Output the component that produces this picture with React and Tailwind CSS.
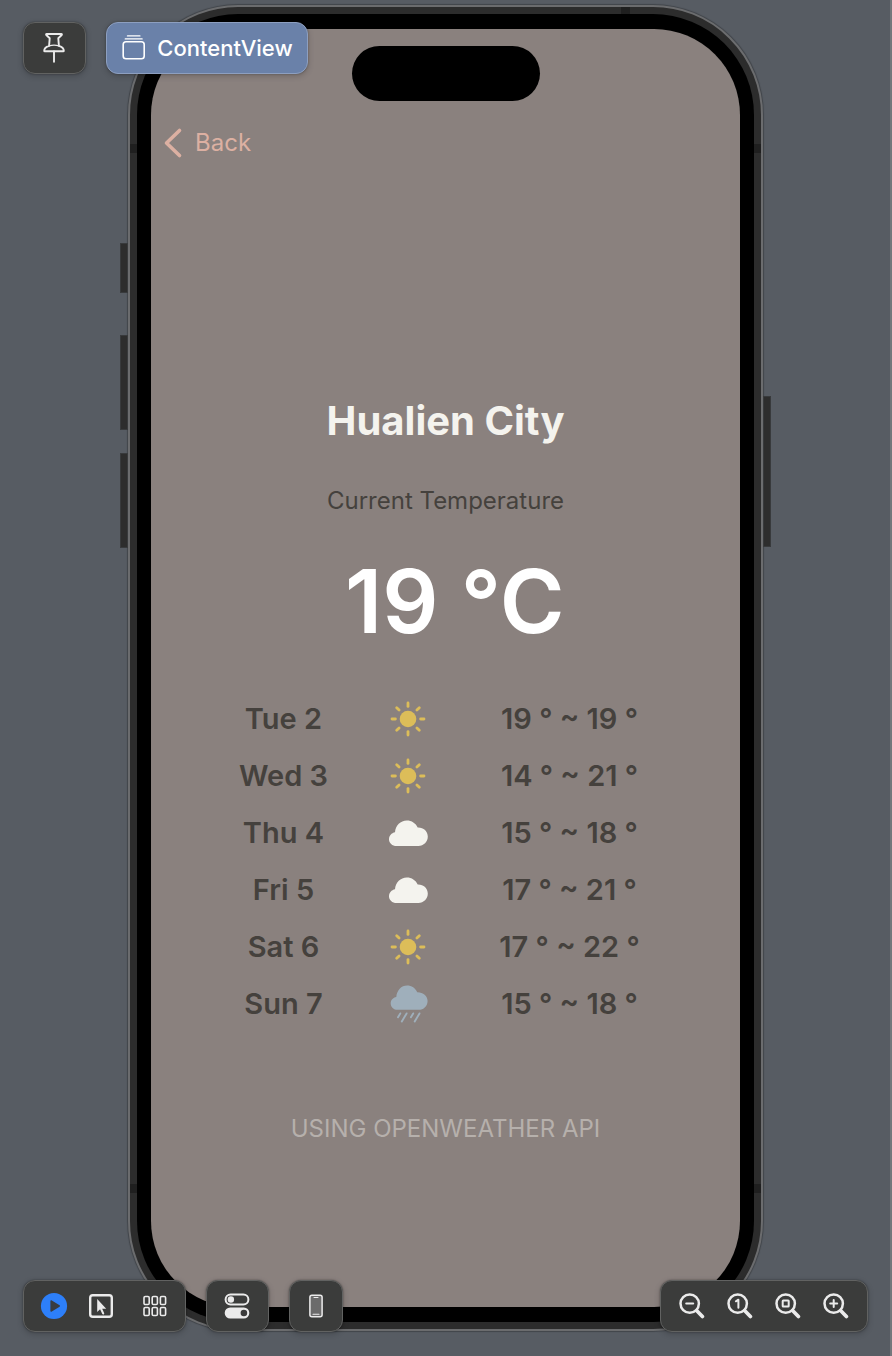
import React from "react";

const forecast = [
  { day: "Tue 2", weather: "sun", range: "19 ° ~ 19 °" },
  { day: "Wed 3", weather: "sun", range: "14 ° ~ 21 °" },
  { day: "Thu 4", weather: "cloud", range: "15 ° ~ 18 °" },
  { day: "Fri 5", weather: "cloud", range: "17 ° ~ 21 °" },
  { day: "Sat 6", weather: "sun", range: "17 ° ~ 22 °" },
  { day: "Sun 7", weather: "rain", range: "15 ° ~ 18 °" },
];

function SunIcon() {
  return (
    <svg width="40" height="40" viewBox="0 0 40 40" role="img" aria-label="Sunny" className="text-[#dcbd59]">
      <circle cx="20" cy="20" r="8.3" fill="currentColor" />
      <g stroke="currentColor" strokeWidth="2.8" strokeLinecap="round">
        {[0, 45, 90, 135, 180, 225, 270, 315].map((a) => (
          <path key={a} d="M20 4v3.4" transform={`rotate(${a} 20 20)`} />
        ))}
      </g>
    </svg>
  );
}

function CloudIcon() {
  return (
    <svg width="40" height="40" viewBox="0 0 40 40" role="img" aria-label="Cloudy" className="text-[#f4f3ee]">
      <path
        fill="currentColor"
        d="M8.6 33C4.2 33 1 30 1 26.2c0-3.6 2.5-6.3 6-7C7.6 12.6 12.5 7.6 18.8 7.6c4.9 0 8.9 2.7 10.9 7 5.8-.2 10.1 3.8 10.1 9 0 5.3-4.1 9.4-9.5 9.4z"
      />
    </svg>
  );
}

function RainIcon() {
  return (
    <svg width="40" height="40" viewBox="0 0 40 40" role="img" aria-label="Rain" className="text-[#9fafbb]">
      <path
        fill="currentColor"
        d="M9.6 25.8C5.6 25.8 2.7 23 2.7 19.4c0-3.4 2.3-5.8 5.6-6.4C8.8 6.3 13.3 1.5 19.1 1.5c4.5 0 8.3 2.6 10.1 6.7 5.6-.2 10.4 3.7 10.4 8.7 0 5-3.9 8.9-9 8.9z"
      />
      <path
        d="M12.3 29.4l-2.3 3.8M18.6 29.4l-4.8 8.1M25.2 29.4l-2.3 3.8M31.5 29.4l-4.8 8.1"
        stroke="currentColor"
        strokeWidth="1.9"
        strokeLinecap="round"
      />
    </svg>
  );
}

const weatherIcons = { sun: SunIcon, cloud: CloudIcon, rain: RainIcon };

function PinIcon() {
  return (
    <svg width="23" height="32" viewBox="0 0 23 32" fill="none" stroke="currentColor" strokeWidth="1.9" strokeLinejoin="round" strokeLinecap="round">
      <path d="M3.6 2h14.800c.5 0 .7.600.3 1l-3.400 3.300.6 7.600c3 1 4.900 2.900 4.900 4.800 0 .4-.2.600-.6.600H1.800c-.4 0-.6-.2-.6-.600 0-1.900 1.900-3.800 4.900-4.800l.6-7.600L3.300 3c-.4-.4-.2-1 .3-1z" />
      <path d="M6.200 13.900c3-1 6.600-1 9.600 0" strokeWidth="1.400" />
      <path d="M11 19.500v10.300" />
    </svg>
  );
}

function StackIcon() {
  return (
    <svg width="24" height="28" viewBox="0 0 24 28" fill="none" stroke="currentColor" strokeWidth="1.600" strokeLinecap="round">
      <rect x="2.200" y="7.800" width="21" height="17" rx="2.800" />
      <path d="M4.300 4.900h16.800M6.500 1.900h12.400" strokeWidth="1.400" />
    </svg>
  );
}

function PlayIcon() {
  return (
    <svg width="28" height="28" viewBox="0 0 28 28">
      <circle cx="14" cy="14" r="13.1" fill="#2d7ff9" />
      <path d="M10.4 8.900v10.200c0 .6.500.8 1 .6l8.200-5c.5-.3.5-1.100 0-1.400l-8.200-5c-.5-.2-1 0-1 .6z" fill="#383c42" />
    </svg>
  );
}

function PointerIcon() {
  return (
    <svg width="26" height="26" viewBox="0 0 26 26">
      <rect x="2.200" y="2.200" width="21.600" height="21.600" rx="2.600" fill="none" stroke="currentColor" strokeWidth="2.400" />
      <path d="M9.200 6v13l2.900-2.700 2.200 4.800c.5 1 2.300.2 1.900-.8l-2-4.600h4z" fill="currentColor" />
    </svg>
  );
}

function GridIcon() {
  return (
    <svg width="24" height="22" viewBox="0 0 24 22" fill="none" stroke="currentColor" strokeWidth="1.600">
      {[1, 9.200, 17.400].map((x) =>
        [1.500, 12.500].map((y) => <rect key={`${x}-${y}`} x={x} y={y} width="5.200" height="8" rx="1.300" />)
      )}
    </svg>
  );
}

function TogglesIcon() {
  return (
    <svg width="27" height="26" viewBox="0 0 27 26">
      <rect x="1.600" y="1.500" width="22.800" height="10" rx="5" fill="none" stroke="currentColor" strokeWidth="2" />
      <circle cx="6.900" cy="6.500" r="3.200" fill="currentColor" />
      <rect x="0.700" y="14.500" width="24.600" height="11" rx="5.500" fill="currentColor" />
      <circle cx="19.900" cy="20" r="3.300" fill="#3b3b3b" />
    </svg>
  );
}

function DeviceIcon() {
  return (
    <svg width="14" height="24" viewBox="0 0 14 24">
      <rect x="0.900" y="1.200" width="12.200" height="21.600" rx="2" fill="#6b6b6b" stroke="currentColor" strokeWidth="1.500" />
      <path d="M5 3.500h4M4 20.300h6" stroke="currentColor" strokeWidth="1.100" strokeLinecap="round" />
    </svg>
  );
}

function ZoomIcon({ children }) {
  return (
    <svg width="26" height="26" viewBox="0 0 26 26" fill="none" stroke="currentColor" strokeLinecap="round" strokeLinejoin="round">
      <circle cx="10.700" cy="10.600" r="9.200" strokeWidth="2.500" />
      <path d="M17.800 17.700l5.600 5.800" strokeWidth="3.700" />
      {children}
    </svg>
  );
}

const zoomActions = [
  { label: "Zoom out", mark: <path d="M7.200 10.600h7" strokeWidth="2" /> },
  { label: "Actual size", mark: <path d="M8.900 8.300l2.500-1.600v8" strokeWidth="2" /> },
  { label: "Zoom to fit", mark: <rect x="7.700" y="7.600" width="6" height="6" rx="0.500" strokeWidth="2" /> },
  { label: "Zoom in", mark: <path d="M7.200 10.600h7M10.700 7.100v7" strokeWidth="2" /> },
];

const panel =
  "flex h-[52px] items-center rounded-xl border border-[#616261] bg-[#3b3c3b] text-[#ebebeb] shadow-[0_0_2px_rgba(0,0,0,0.4),0_2px_6px_rgba(0,0,0,0.2)]";
const iconButton = "flex h-full items-center justify-center";
const band = "absolute bg-[#1f1f1f]";
const sideKey = "absolute w-2 border border-[#383a3c] bg-[#2d2d2d]";

export default function App() {
  return (
    <div className="relative flex min-h-screen flex-col border-r-2 border-[#74777c] bg-[#575c63] pt-[5px] pb-[25px] pl-px font-[Inter,'Liberation_Sans',sans-serif]">
      <div className="relative mx-auto flex w-full max-w-[635px] flex-1 flex-col rounded-[110px] border-2 border-[#6b6c6e] bg-[#2c2c2c] p-[7px] shadow-[0_0_1px_1px_rgba(0,0,0,0.25)]">
        <span className={`${sideKey} top-[236px] -left-[10px] h-[50px]`} />
        <span className={`${sideKey} top-[328px] -left-[10px] h-[95px]`} />
        <span className={`${sideKey} top-[446px] -left-[10px] h-[95px]`} />
        <span className={`${sideKey} top-[389px] -right-[10px] h-[151px]`} />
        <span className={`${band} top-0 right-[131px] h-[7px] w-[9px]`} />
        <span className={`${band} top-[137px] left-0 h-[9px] w-[7px]`} />
        <span className={`${band} top-[137px] right-0 h-[9px] w-[7px]`} />
        <span className={`${band} bottom-[136px] left-0 h-[9px] w-[7px]`} />
        <span className={`${band} right-0 bottom-[136px] h-[9px] w-[7px]`} />

        <div className="relative flex flex-1 flex-col rounded-[101px] bg-black px-[14px] py-[15px]">
          <div className="flex flex-1 flex-col rounded-[86px] bg-[#8a817e] pt-[17px]">
            <div className="mx-auto h-[55px] w-[188px] rounded-full bg-black" />
            <nav className="flex h-[84px] items-center pl-3">
              <button type="button" className="flex items-center gap-3 text-2xl text-[#dcb0a2]">
                <svg width="20" height="32" viewBox="0 0 20 32" fill="none" stroke="currentColor" strokeWidth="3.600" strokeLinecap="round" strokeLinejoin="round">
                  <path d="M16.500 3.500L3.500 16l13 12.500" />
                </svg>
                Back
              </button>
            </nav>

            <main className="flex flex-1 flex-col items-center pt-[210px] text-[#45413d]">
              <div className="flex flex-col items-center">
                <h1 className="text-[40px] leading-[52px] font-bold text-[#f4f3ee]">Hualien City</h1>
                <p className="mt-[38px] text-2xl">Current Temperature</p>
                <p className="mt-8 self-end text-[88px] leading-[104px] font-semibold text-white">19 °C</p>
              </div>
              <table className="mt-[37px] w-full max-w-[428px] table-fixed text-center text-[29px] font-semibold">
                <colgroup>
                  <col className="w-[104px]" />
                  <col className="w-[144px]" />
                  <col />
                </colgroup>
                <tbody>
                  {forecast.map(({ day, weather, range }) => {
                    const Icon = weatherIcons[weather];
                    return (
                      <tr key={day} className="h-[57px]">
                        <th scope="row" className="p-0 font-semibold">{day}</th>
                        <td className="p-0">
                          <span className="flex justify-center"><Icon /></span>
                        </td>
                        <td className="p-0">{range}</td>
                      </tr>
                    );
                  })}
                </tbody>
              </table>
              <p className="mt-[81px] text-2xl text-[#b6b0ac]">USING OPENWEATHER API</p>
            </main>
          </div>
        </div>
      </div>

      <div className="absolute inset-0 flex flex-col justify-between pt-[22px] pr-[22px] pb-6 pl-[23px]">
        <header className="flex gap-5">
          <button type="button" aria-label="Pin preview" className={`${panel} w-[63px] justify-center`}>
            <PinIcon />
          </button>
          <button
            type="button"
            className="flex h-[52px] w-[202px] items-center justify-center gap-3 rounded-xl border border-[#8d9fc0] bg-[#6a81a9] text-[22px] font-medium text-white shadow-[0_0_2px_rgba(0,0,0,0.3),0_2px_6px_rgba(0,0,0,0.2)]"
          >
            <StackIcon />
            ContentView
          </button>
        </header>
        <footer className="flex gap-5">
          <div className={`${panel} pl-[6px]`}>
            <button type="button" aria-label="Live preview" className={`${iconButton} w-12`}><PlayIcon /></button>
            <button type="button" aria-label="Selectable preview" className={`${iconButton} w-[46px]`}><PointerIcon /></button>
            <button type="button" aria-label="Variants" className={`${iconButton} w-[61px]`}><GridIcon /></button>
          </div>
          <button type="button" aria-label="Device settings" className={`${panel} w-[63px] justify-center`}>
            <TogglesIcon />
          </button>
          <button type="button" aria-label="Choose device" className={`${panel} w-[54px] justify-center`}>
            <DeviceIcon />
          </button>
          <div className={`${panel} ml-auto px-[7px]`}>
            {zoomActions.map(({ label, mark }) => (
              <button key={label} type="button" aria-label={label} className={`${iconButton} w-12`}>
                <ZoomIcon>{mark}</ZoomIcon>
              </button>
            ))}
          </div>
        </footer>
      </div>
    </div>
  );
}
